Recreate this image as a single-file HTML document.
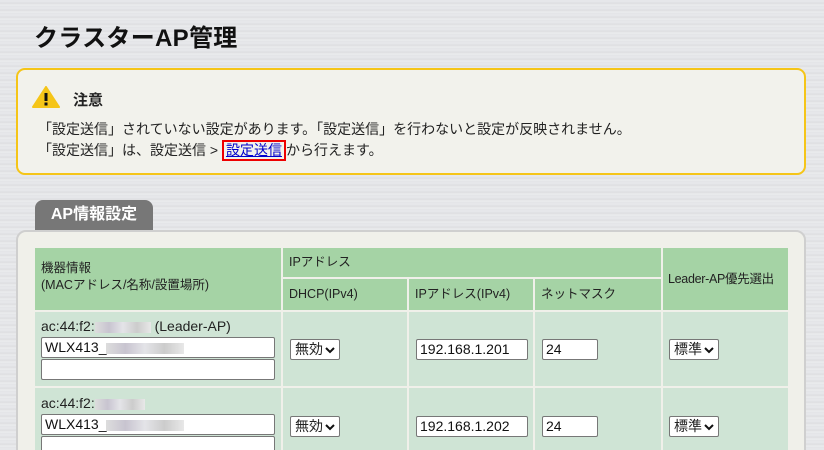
<!DOCTYPE html>
<html><head><meta charset="utf-8"><style>
*{box-sizing:border-box;margin:0;padding:0}
html,body{width:824px;height:450px;overflow:hidden}
body{position:relative;font-family:"Liberation Sans","Noto Sans CJK JP",sans-serif;color:#222;font-size:13px;
background:repeating-linear-gradient(180deg,#e6e7ea 0,#e6e7ea 2px,#dcdde0 3px,#ebecee 5px,#e2e3e6 7px)}
.a{position:absolute}
h1{position:absolute;left:34px;top:18px;font-size:24px;font-weight:bold;color:#111;letter-spacing:0.3px}
.note{left:16px;top:68px;width:790px;height:107px;background:#f2f2ec;border:2px solid #f5c518;border-radius:9px}
.tab{left:35px;top:200px;width:118px;height:32px;background:#777;border-radius:8px 8px 0 0;color:#fff;font-weight:bold;font-size:16px;text-align:center;line-height:30px}
.panel{left:16px;top:230px;width:790px;height:240px;background:#f0f0ea;border:2px solid #cfcfcf;border-radius:10px}
.h{background:#a5d3a5;font-size:12.5px;color:#222;padding:0 6px;white-space:nowrap}
.d{background:#cfe4d5}
.in{background:#fff;border:1px solid #777;border-radius:2px;height:21px;font-size:14px;padding-left:3px;line-height:19px;color:#111;white-space:nowrap;overflow:hidden}
.sel{background:#fff;border:1px solid #777;border-radius:2px;height:21px;font-size:14px;padding-left:4px;line-height:19px}
.sel svg{position:absolute;right:4px;top:7px}
.blur{display:inline-block;height:11px;vertical-align:middle;background:linear-gradient(90deg,#ddd,#c8c4d0,#e4e4e8,#ccc,#e8e8e8)}
.t{font-size:14px}
</style></head><body>
<h1>クラスターAP管理</h1>
<div class="a note"></div>
<svg class="a" style="left:32px;top:86px" width="28" height="22" viewBox="0 0 28 22"><path d="M14 1 L27 21 L1 21 Z" fill="#f5c518" stroke="#f5c518" stroke-linejoin="round" stroke-width="2"/><rect x="12.5" y="7" width="3" height="8" fill="#111"/><rect x="12.5" y="16.5" width="3" height="3" fill="#111"/></svg>
<div class="a" style="left:73px;top:89px;font-weight:bold;font-size:15px">注意</div>
<div class="a t" style="left:38px;top:119px">「設定送信」されていない設定があります。「設定送信」を行わないと設定が反映されません。</div>
<div class="a t" style="left:38px;top:140px">「設定送信」は、設定送信 &gt; <span style="display:inline-block;border:2px solid #e00;padding:0 2px;line-height:17px;color:#00c;text-decoration:underline">設定送信</span>から行えます。</div>
<div class="a tab">AP情報設定</div>
<div class="a panel"></div>
<div class="a h" style="left:35px;top:248px;width:246px;height:62px;padding-top:12px;line-height:17px">機器情報<br>(MACアドレス/名称/設置場所)</div>
<div class="a h" style="left:283px;top:248px;width:378px;height:29px;line-height:29px">IPアドレス</div>
<div class="a h" style="left:283px;top:279px;width:124px;height:31px;line-height:31px">DHCP(IPv4)</div>
<div class="a h" style="left:409px;top:279px;width:124px;height:31px;line-height:31px">IPアドレス(IPv4)</div>
<div class="a h" style="left:535px;top:279px;width:126px;height:31px;line-height:31px">ネットマスク</div>
<div class="a h" style="left:663px;top:248px;width:125px;height:62px;line-height:62px;padding:0 5px;letter-spacing:-0.3px">Leader-AP優先選出</div>
<div class="a d" style="left:35px;top:312px;width:246px;height:74px"></div>
<div class="a d" style="left:283px;top:312px;width:124px;height:74px"></div>
<div class="a d" style="left:409px;top:312px;width:124px;height:74px"></div>
<div class="a d" style="left:535px;top:312px;width:126px;height:74px"></div>
<div class="a d" style="left:663px;top:312px;width:125px;height:74px"></div>
<div class="a" style="left:41px;top:318px;font-size:14px">ac:44:f2:<span class="blur" style="width:56px"></span> (Leader-AP)</div>
<div class="a in" style="left:41px;top:337px;width:234px">WLX413_<span class="blur" style="width:78px"></span></div>
<div class="a in" style="left:41px;top:359px;width:234px"></div>
<div class="a sel" style="left:290px;top:339px;width:50px">無効<svg width="10" height="7" viewBox="0 0 10 7"><path d="M1 1 L5 5 L9 1" fill="none" stroke="#111" stroke-width="2"/></svg></div>
<div class="a in" style="left:416px;top:339px;width:112px">192.168.1.201</div>
<div class="a in" style="left:542px;top:339px;width:56px">24</div>
<div class="a sel" style="left:669px;top:339px;width:50px">標準<svg width="10" height="7" viewBox="0 0 10 7"><path d="M1 1 L5 5 L9 1" fill="none" stroke="#111" stroke-width="2"/></svg></div>
<div class="a d" style="left:35px;top:388px;width:246px;height:70px"></div>
<div class="a d" style="left:283px;top:388px;width:124px;height:70px"></div>
<div class="a d" style="left:409px;top:388px;width:124px;height:70px"></div>
<div class="a d" style="left:535px;top:388px;width:126px;height:70px"></div>
<div class="a d" style="left:663px;top:388px;width:125px;height:70px"></div>
<div class="a" style="left:41px;top:395px;font-size:14px">ac:44:f2:<span class="blur" style="width:50px"></span></div>
<div class="a in" style="left:41px;top:414px;width:234px">WLX413_<span class="blur" style="width:78px"></span></div>
<div class="a in" style="left:41px;top:436px;width:234px"></div>
<div class="a sel" style="left:290px;top:416px;width:50px">無効<svg width="10" height="7" viewBox="0 0 10 7"><path d="M1 1 L5 5 L9 1" fill="none" stroke="#111" stroke-width="2"/></svg></div>
<div class="a in" style="left:416px;top:416px;width:112px">192.168.1.202</div>
<div class="a in" style="left:542px;top:416px;width:56px">24</div>
<div class="a sel" style="left:669px;top:416px;width:50px">標準<svg width="10" height="7" viewBox="0 0 10 7"><path d="M1 1 L5 5 L9 1" fill="none" stroke="#111" stroke-width="2"/></svg></div>
</body></html>
